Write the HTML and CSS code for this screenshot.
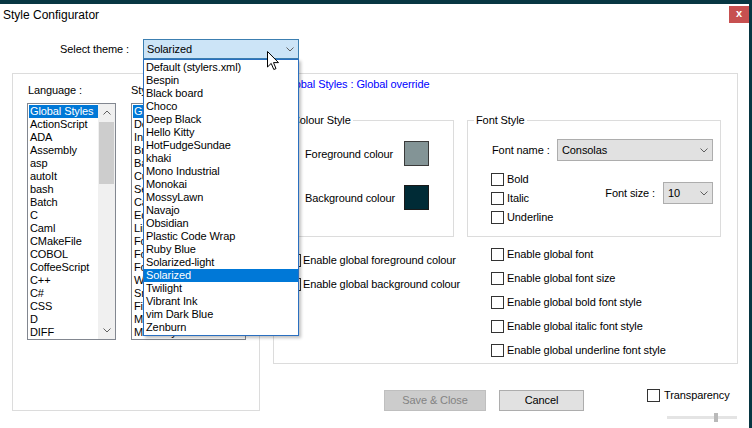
FILE: index.html
```html
<!DOCTYPE html>
<html>
<head>
<meta charset="utf-8">
<title>Style Configurator</title>
<link rel="stylesheet" href="styles.css">
</head>
<body>
<div class="desk">
  <div class="window">
    <div class="titlebar">
      <span class="title">Style Configurator</span>
      <span class="close">x</span>
    </div>

    <div class="theme-row">
      <span class="theme-label">Select theme :</span>
      <div class="combo combo-open">
        <span>Solarized</span>
        <svg class="chev" width="8" height="5" viewBox="0 0 8 5"><path d="M0.5 0.5 L4 4 L7.5 0.5" fill="none" stroke="#5f5f5f" stroke-width="1"/></svg>
      </div>
    </div>

    <div class="main">
      <div class="group left-group">
        <div class="lang-col">
          <div class="lbl">Language :</div>
          <div class="listbox lang-list">
            <ul class="items">
              <li class="sel">Global Styles</li>
              <li>ActionScript</li>
              <li>ADA</li>
              <li>Assembly</li>
              <li>asp</li>
              <li>autoIt</li>
              <li>bash</li>
              <li>Batch</li>
              <li>C</li>
              <li>Caml</li>
              <li>CMakeFile</li>
              <li>COBOL</li>
              <li>CoffeeScript</li>
              <li>C++</li>
              <li>C#</li>
              <li>CSS</li>
              <li>D</li>
              <li>DIFF</li>
            </ul>
            <div class="vscroll">
              <div class="sbtn"><svg width="8" height="5" viewBox="0 0 8 5"><path d="M0.5 4.5 L4 1 L7.5 4.5" fill="none" stroke="#606060"/></svg></div>
              <div class="thumb"></div>
              <div class="track"></div>
              <div class="sbtn"><svg width="8" height="5" viewBox="0 0 8 5"><path d="M0.5 0.5 L4 4 L7.5 0.5" fill="none" stroke="#606060"/></svg></div>
            </div>
          </div>
        </div>
        <div class="style-col">
          <div class="lbl lbl-style">Style :</div>
          <div class="listbox style-list">
            <ul class="items">
              <li class="sel">Global override</li>
              <li>Default Style</li>
              <li>Indent guideline style</li>
              <li>Brace highlight style</li>
              <li>Bad brace colour</li>
              <li>Current line background colour</li>
              <li>Selected text colour</li>
              <li>Caret colour</li>
              <li>Edge colour</li>
              <li>Line number margin</li>
              <li>Fold</li>
              <li>Fold active</li>
              <li>Fold margin</li>
              <li>White space symbol</li>
              <li>Smart HighLighting</li>
              <li>Find Mark Style</li>
              <li>Mark Style 1</li>
              <li>Mark Style 2</li>
            </ul>
          </div>
        </div>
      </div>

      <div class="right-col">
        <div class="group right-group">
          <div class="caption">Global Styles : Global override</div>
          <div class="boxes">
            <fieldset class="gbox colour-box">
              <legend>Colour Style</legend>
              <div class="swrow">
                <span class="swlabel">Foreground colour</span>
                <span class="swatch fg"></span>
              </div>
              <div class="swrow swrow2">
                <span class="swlabel">Background colour</span>
                <span class="swatch bg"></span>
              </div>
            </fieldset>
            <fieldset class="gbox font-box">
              <legend>Font Style</legend>
              <div class="fname-row">
                <span class="fname-label">Font name :</span>
                <div class="combo combo-font">
                  <span>Consolas</span>
                  <svg class="chev" width="8" height="5" viewBox="0 0 8 5"><path d="M0.5 0.5 L4 4 L7.5 0.5" fill="none" stroke="#5f5f5f"/></svg>
                </div>
              </div>
              <div class="fopts">
                <div class="fchecks">
                  <label class="chk"><span class="box"></span><span>Bold</span></label>
                  <label class="chk"><span class="box"></span><span>Italic</span></label>
                  <label class="chk"><span class="box"></span><span>Underline</span></label>
                </div>
                <div class="fsize">
                  <span class="fsize-label">Font size :</span>
                  <div class="combo combo-size">
                    <span>10</span>
                    <svg class="chev" width="8" height="5" viewBox="0 0 8 5"><path d="M0.5 0.5 L4 4 L7.5 0.5" fill="none" stroke="#5f5f5f"/></svg>
                  </div>
                </div>
              </div>
            </fieldset>
          </div>
          <div class="enables">
            <div class="en-left">
              <label class="erow"><span class="box"></span><span class="etext tight">Enable global foreground colour</span></label>
              <label class="erow"><span class="box"></span><span class="etext tight">Enable global background colour</span></label>
            </div>
            <div class="en-right">
              <label class="erow"><span class="box"></span><span class="etext">Enable global font</span></label>
              <label class="erow"><span class="box"></span><span class="etext">Enable global font size</span></label>
              <label class="erow"><span class="box"></span><span class="etext">Enable global bold font style</span></label>
              <label class="erow"><span class="box"></span><span class="etext">Enable global italic font style</span></label>
              <label class="erow"><span class="box"></span><span class="etext">Enable global underline font style</span></label>
            </div>
          </div>
        </div>

        <div class="bottom">
          <button class="btn btn-disabled" type="button">Save &amp; Close</button>
          <button class="btn btn-cancel" type="button">Cancel</button>
          <div class="transp">
            <label class="chk trow"><span class="box"></span><span>Transparency</span></label>
            <div class="slider"><div class="sthumb"></div></div>
          </div>
        </div>
      </div>
    </div>

    <ul class="dropdown">
      <li>Default (stylers.xml)</li>
      <li>Bespin</li>
      <li>Black board</li>
      <li>Choco</li>
      <li>Deep Black</li>
      <li>Hello Kitty</li>
      <li>HotFudgeSundae</li>
      <li>khaki</li>
      <li>Mono Industrial</li>
      <li>Monokai</li>
      <li>MossyLawn</li>
      <li>Navajo</li>
      <li>Obsidian</li>
      <li>Plastic Code Wrap</li>
      <li>Ruby Blue</li>
      <li>Solarized-light</li>
      <li class="sel">Solarized</li>
      <li>Twilight</li>
      <li>Vibrant Ink</li>
      <li>vim Dark Blue</li>
      <li>Zenburn</li>
    </ul>

    <svg class="cursor" width="13" height="20" viewBox="0 0 13 20">
      <path d="M0.5 0.5 L0.5 16 L4.2 12.4 L6.8 18.5 L9 17.6 L6.5 11.6 L11.5 11.6 Z" fill="#fff" stroke="#000" stroke-width="1" stroke-linejoin="miter"/>
    </svg>
  </div>
</div>
</body>
</html>
```
FILE: styles.css
```css
* { box-sizing: border-box; }
html, body { margin: 0; padding: 0; }
body {
  background: #073642;
  width: 752px;
  height: 428px;
  overflow: hidden;
  font-family: "Liberation Sans", Arial, sans-serif;
  font-size: 11px;
  letter-spacing: -0.1px;
  color: #000;
}
ul { list-style: none; margin: 0; padding: 0; }
li { white-space: nowrap; }

.desk { padding-top: 4px; }
.window {
  position: relative;
  width: 749px;
  height: 424px;
  background: #fff;
}

.titlebar {
  height: 26px;
  display: flex;
  justify-content: space-between;
  align-items: flex-start;
}
.title {
  font-size: 12px;
  letter-spacing: 0;
  line-height: 14px;
  padding: 4px 0 0 3px;
}
.close {
  width: 20px;
  height: 17px;
  margin-top: 2px;
  background: #c75050;
  color: #fff;
  font-size: 11px;
  font-weight: bold;
  line-height: 15px;
  text-align: center;
}

.theme-row {
  display: flex;
  align-items: center;
  margin-top: 9px;
  height: 20px;
  line-height: 13px;
}
.theme-label { width: 129px; text-align: right; }

.combo {
  display: flex;
  align-items: center;
  justify-content: space-between;
  line-height: 13px;
}
.combo-open {
  margin-left: 14px;
  width: 156px;
  height: 20px;
  border: 1px solid #3c7fb1;
  background: #cce4f7;
  padding: 0 4px 0 3px;
}
.chev { display: block; }

.main {
  display: flex;
  align-items: flex-start;
  margin-top: 14px;
}

.group { border: 1px solid #dcdcdc; }
.left-group {
  margin-left: 12px;
  width: 248px;
  height: 338px;
  display: flex;
  padding: 10px 0 0 14px;
}
.lbl { line-height: 13px; height: 13px; margin-bottom: 6px; padding-left: 1px; }
.lbl-style { padding-left: 0; }
.lang-col { width: 89px; }
.style-col { width: 115px; margin-left: 15px; }

.listbox {
  border: 1px solid #828790;
  background: #fff;
  height: 237px;
  overflow: hidden;
}
.lang-list { display: flex; }
.items { padding: 1px 0 0 1px; line-height: 13px; overflow: hidden; }
.lang-list .items { width: 70px; }
.items li { height: 13px; padding-left: 1px; }
.items li.sel { background: #0078d7; color: #fff; }

.vscroll {
  width: 17px;
  background: #f0f0f0;
  display: flex;
  flex-direction: column;
}
.sbtn {
  height: 17px;
  display: flex;
  align-items: center;
  justify-content: center;
}
.thumb {
  height: 62px;
  margin: 1px 1px 0 1px;
  background: #cdcdcd;
}
.track { flex: 1; }

.right-col {
  margin-left: 13px;
  width: 465px;
  display: flex;
  flex-direction: column;
}
.right-group { height: 291px; }
.caption {
  color: #0000ff;
  line-height: 13px;
  padding: 4px 0 0 10px;
}
.boxes {
  display: flex;
  margin-top: 23px;
  padding-left: 9px;
}
.gbox {
  margin: 0;
  padding: 0;
  min-width: 0;
  border: 1px solid #dcdcdc;
  height: 123px;
}
.gbox legend {
  padding: 0 2px;
  margin-left: 6px;
  line-height: 13px;
}
.colour-box { width: 171px; padding-top: 14px; }
.font-box { width: 254px; margin-left: 13px; padding-top: 12px; }

.swrow {
  display: flex;
  align-items: center;
  height: 25px;
  padding-left: 21px;
}
.swrow2 { margin-top: 19px; }
.swlabel { width: 99px; }
.swatch {
  width: 25px;
  height: 25px;
  border: 1px solid #3a3a3a;
}
.swatch.fg { background: #839496; }
.swatch.bg { background: #002b36; border-color: #1a1a1a; }

.fname-row {
  display: flex;
  align-items: center;
  padding-left: 24px;
}
.fname-label { width: 65px; }
.combo-font, .combo-size {
  height: 22px;
  background: #e1e1e1;
  border: 1px solid #adadad;
  padding: 0 4px 0 4px;
}
.combo-font { width: 156px; }
.combo-size { width: 50px; }

.fopts {
  display: flex;
  align-items: flex-start;
  margin-top: 9px;
}
.fchecks { padding-left: 23px; }
.chk {
  display: flex;
  align-items: center;
  height: 19px;
  line-height: 13px;
}
.box {
  display: block;
  width: 13px;
  height: 13px;
  border: 1px solid #333;
  background: #fff;
  flex: none;
}
.chk .box { margin-right: 3px; }
.fsize {
  display: flex;
  align-items: center;
  margin-left: auto;
  margin-right: 7px;
  margin-top: 12px;
}
.fsize-label { margin-right: 8px; }

.enables {
  display: flex;
  margin-top: 5px;
}
.en-left { width: 217px; padding-left: 14px; padding-top: 6px; }
.erow {
  display: flex;
  align-items: center;
  height: 24px;
  line-height: 13px;
}
.erow .box { margin-right: 3px; }
.en-left .erow .box { margin-right: 2px; }

.bottom {
  display: flex;
  align-items: flex-start;
  margin-top: 26px;
  padding-left: 111px;
}
.btn {
  font: inherit;
  letter-spacing: inherit;
  height: 21px;
  padding: 0;
  margin: 0;
  line-height: 13px;
}
.btn-disabled {
  width: 102px;
  background: #cccccc;
  border: 1px solid #bfbfbf;
  color: #838383;
}
.btn-cancel {
  width: 85px;
  margin-left: 13px;
  background: #e1e1e1;
  border: 1px solid #adadad;
  color: #000;
}
.transp { margin-left: 63px; margin-top: -1px; width: 90px; }
.trow { height: 13px; }
.trow .box { margin-right: 4px; }
.slider {
  width: 70px;
  height: 9px;
  margin: 11px 0 0 20px;
  background: linear-gradient(#e4e4e4, #e4e4e4) center / 100% 3px no-repeat;
  border-radius: 1px;
}
.sthumb {
  width: 4px;
  height: 9px;
  margin-left: 47px;
  background: #b9b9b9;
}

.dropdown {
  position: absolute;
  left: 143px;
  top: 55px;
  width: 156px;
  padding: 1px 0;
  background: #fff;
  border: 1px solid #2a6fc0;
  box-shadow: 2px 2px 3px rgba(0, 0, 0, 0.25);
  line-height: 13px;
}
.dropdown li { height: 13px; padding-left: 2px; }
.dropdown li.sel { background: #0078d7; color: #fff; }

.cursor {
  position: absolute;
  left: 267px;
  top: 47px;
}
```
